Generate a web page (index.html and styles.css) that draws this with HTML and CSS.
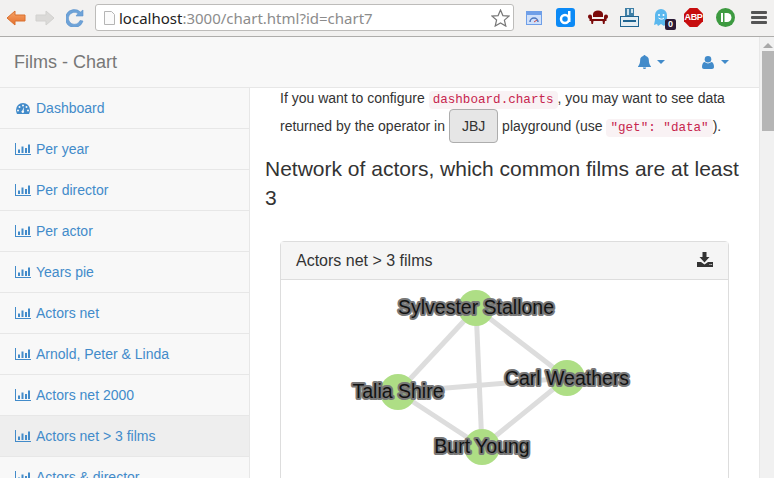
FILE: index.html
```html
<!DOCTYPE HTML>
<html>
<head>
	<title>Films - Chart</title>
	<link rel="stylesheet" href="styles.css">
</head>
<body>
	<svg class="defs" width="0" height="0">
		<defs>
			<linearGradient id="orange" x1="0" y1="0" x2="0" y2="1">
				<stop offset="0" stop-color="#f6a468"/>
				<stop offset="1" stop-color="#e56f2c"/>
			</linearGradient>
		</defs>
		<symbol id="bars" viewBox="0 0 16 12">
			<path d="M0 0h1v11h15v1H0z"/>
			<path d="M3 6.500h2V10H3zM6.500 3.500h2V10h-2zM10 5h2v5h-2zM13 1.500h2V10h-2z"/>
		</symbol>
	</svg>

	<div class="toolbar">
		<svg class="tool-icon" width="20" height="16" viewBox="0 0 20 16"><path d="M9 1 1 8l8 7v-4h10V5H9z" fill="url(#orange)" stroke="#d9702f"/></svg>
		<svg class="tool-icon fwd" width="20" height="16" viewBox="0 0 20 16"><path d="M11 1l8 7-8 7v-4H1V5h10z" fill="#dbdad8" stroke="#d2d1cf"/></svg>
		<svg class="tool-icon reload" width="18" height="18" viewBox="0 0 18 18"><path d="M14 11.500A6 6 0 1 1 12 4.500L10 7h7V1l-2.500 2A9 9 0 1 0 17 12z" fill="#6ea3d8" stroke="#5b92cc" stroke-width=".6"/></svg>
		<div class="urlbar">
			<svg width="11" height="14" viewBox="0 0 11 14"><path d="M.5.500h7l3 3v10H.5z" fill="#fbfbfb" stroke="#b5b5b5"/></svg>
			<span class="url"><b>localhost</b>:3000/chart.html?id=chart7</span>
			<svg class="star" width="19" height="18" viewBox="0 0 19 18"><path d="M9.500 1l2.400 5.600 6.100.5-4.600 4 1.400 6-5.300-3.200L4.200 17l1.400-6L1 7.100l6.100-.5z" fill="#fff" stroke="#777" stroke-width="1.200"/></svg>
		</div>
		<div class="ext">
			<svg width="16" height="16" viewBox="0 0 16 16"><rect x=".5" y="1.500" width="15" height="13" fill="#cfe0fa" stroke="#6f9fe8"/><path d="M1 2h14v3H1z" fill="#6f9fe8"/><path d="M4 12a4 4 0 0 1 8 0" fill="none" stroke="#4a76c0" stroke-width="1.500"/><path d="M8 12l3-2" stroke="#c44" stroke-width="1"/></svg>
			<svg class="ext-d" width="19" height="19" viewBox="0 0 19 19"><rect width="19" height="19" rx="3" fill="#0c8af6"/><circle cx="9" cy="11" r="4" fill="none" stroke="#fff" stroke-width="2.500"/><path d="M12 3h2.500v11H12z" fill="#fff"/></svg>
			<svg class="ext-couch" width="20" height="15" viewBox="0 0 20 15"><path d="M5 7V4a5 3.500 0 0 1 10 0v3z" fill="#7b0b0b"/><path d="M0 6.500a2 2 0 0 1 4 0V9h12V6.500a2 2 0 0 1 4 0c0 1.500-1 2-1.500 2.500v2H1.500V9C1 8.500 0 8 0 6.500z" fill="#7b0b0b"/><path d="M3 11h2.500l-.5 3H3.500zM14.500 11H17l-.5 3H15z" fill="#7b0b0b"/></svg>
			<svg class="ext-print" width="19" height="19" viewBox="0 0 19 19"><rect x="5" y="0" width="9" height="9" fill="#3f7fa6"/><path d="M7 1h2v6H7zM11 1h2v4h-2z" fill="#cfe3ee"/><rect x=".5" y="8.500" width="18" height="10" fill="#e4edf2" stroke="#1f6491"/><path d="M3 12h13v2H3z" fill="#1f6491"/></svg>
			<div class="ghost">
				<svg width="15" height="19" viewBox="0 0 15 19"><path d="M1 7a6 6 0 0 1 12 0v5l2 5-3-1-2 2-3-2-3 2-1-2-3 1 1-5z" fill="#5bb8ee"/><circle cx="5" cy="7" r="1" fill="#fff"/><circle cx="9.500" cy="7" r="1" fill="#fff"/><path d="M4.500 10c2 1.500 4 1.500 5.500 0" fill="none" stroke="#fff"/></svg>
				<span class="badge">0</span>
			</div>
			<div class="abp"><span>ABP</span></div>
			<svg class="ext-push" width="19" height="19" viewBox="0 0 19 19"><circle cx="9.500" cy="9.500" r="9.500" fill="#3d9a40"/><path d="M5 5h2v9H5z" fill="#fff"/><path d="M8.500 5H11a4.500 4.500 0 0 1 0 9H8.500z" fill="#fff"/></svg>
			<div class="menu-btn"><i></i><i></i><i></i></div>
		</div>
	</div>

	<div class="window">
		<div class="page">
			<nav class="navbar">
				<span class="brand">Films - Chart</span>
				<div class="nav-right">
					<a class="nav-drop bell">
						<svg width="13" height="14" viewBox="0 0 12 14" preserveAspectRatio="none"><path d="M6 0a1 1 0 0 1 1 1.100C9 1.500 10 3.200 10 5c0 3 .8 5 2 6.500V12H0v-.5C1.200 10 2 8 2 5c0-1.800 1-3.500 3-3.900A1 1 0 0 1 6 0zM4.500 12.500h3a1.500 1.500 0 0 1-3 0z"/></svg>
						<i class="caret"></i>
					</a>
					<a class="nav-drop">
						<svg width="12" height="13" viewBox="0 0 12 13"><circle cx="6" cy="3.300" r="3.300"/><path d="M0 11c0-3 1-5 3-5 1 1 2 1.400 3 1.400S8 7 9 6c2 0 3 2 3 5 0 1.200-.8 2-2 2H2c-1.200 0-2-.8-2-2z"/></svg>
						<i class="caret"></i>
					</a>
				</div>
			</nav>

			<div class="columns">
				<ul class="sidebar">
					<li><a><svg class="dash-icon" width="14" height="11" viewBox="0 0 14 11"><path fill-rule="evenodd" d="M7 0a7 7 0 0 1 7 7c0 1.500-.4 2.800-1 4H1C.4 9.800 0 8.500 0 7a7 7 0 0 1 7-7zM7 1.500a1 1 0 1 0 0 2 1 1 0 0 0 0-2zM3.500 3a1 1 0 1 0 0 2 1 1 0 0 0 0-2zM10.500 3a1 1 0 1 0 0 2 1 1 0 0 0 0-2zM2 6.500a1 1 0 1 0 0 2 1 1 0 0 0 0-2zM12 6.500a1 1 0 1 0 0 2 1 1 0 0 0 0-2zM8 4 6.300 7.500a1.300 1.300 0 1 0 1.400.3z"/></svg>Dashboard</a></li>
					<li><a><svg class="bar-icon"><use href="#bars"/></svg>Per year</a></li>
					<li><a><svg class="bar-icon"><use href="#bars"/></svg>Per director</a></li>
					<li><a><svg class="bar-icon"><use href="#bars"/></svg>Per actor</a></li>
					<li><a><svg class="bar-icon"><use href="#bars"/></svg>Years pie</a></li>
					<li><a><svg class="bar-icon"><use href="#bars"/></svg>Actors net</a></li>
					<li><a><svg class="bar-icon"><use href="#bars"/></svg>Arnold, Peter &amp; Linda</a></li>
					<li><a><svg class="bar-icon"><use href="#bars"/></svg>Actors net 2000</a></li>
					<li class="active"><a><svg class="bar-icon"><use href="#bars"/></svg>Actors net &gt; 3 films</a></li>
					<li><a><svg class="bar-icon"><use href="#bars"/></svg>Actors &amp; director</a></li>
				</ul>

				<div class="main">
					<p class="intro">If you want to configure <code>dashboard.charts</code>, you may want to see data returned by the operator in <a class="btn">JBJ</a> playground (use <code>"get": "data"</code>).</p>
					<h3>Network of actors, which common films are at least 3</h3>
					<div class="panel">
						<div class="panel-heading">
							<span>Actors net &gt; 3 films</span>
							<svg width="16" height="15" viewBox="0 0 16 15"><path d="M5.500 0h4v5h3L7.500 10.500 2.500 5h3z"/><path d="M0 10h4l3.500 2.500L11 10h5v5H0z"/><path d="M12.500 12.500h1M14.300 12.500h.8" stroke="#f5f5f5"/></svg>
						</div>
						<svg class="graph" width="447" height="220" viewBox="281 280 447 220">
							<g class="edges">
								<line x1="476" y1="308" x2="567" y2="378"/>
								<line x1="476" y1="308" x2="398" y2="392"/>
								<line x1="476" y1="308" x2="482" y2="447"/>
								<line x1="398" y1="392" x2="567" y2="378"/>
								<line x1="398" y1="392" x2="482" y2="447"/>
								<line x1="567" y1="378" x2="482" y2="447"/>
							</g>
							<g class="nodes">
								<circle cx="476" cy="308" r="18"/>
								<circle cx="567" cy="378" r="18"/>
								<circle cx="398" cy="392" r="18"/>
								<circle cx="482" cy="447" r="18"/>
							</g>
							<g class="labels">
								<text x="476" y="314">Sylvester Stallone</text>
								<text x="567" y="385">Carl Weathers</text>
								<text x="398" y="398">Talia Shire</text>
								<text x="482" y="453">Burt Young</text>
							</g>
						</svg>
					</div>
				</div>
			</div>
		</div>
		<div class="scrollbar">
			<i class="up"></i>
			<div class="thumb"></div>
		</div>
	</div>
</body>
</html>
```

FILE: styles.css
```css
* {
	box-sizing: border-box;
}

html, body {
	height: 100%;
}

body {
	margin: 0;
	overflow: hidden;
	font-family: "Liberation Sans", sans-serif;
	font-size: 14px;
	line-height: 20px;
	color: #333;
	background: #fff;
}

.defs {
	display: block;
	height: 0;
}

/* browser toolbar */
.toolbar {
	height: 37px;
	display: flex;
	align-items: center;
	padding: 0 7px 1px 6px;
	background: #f2f1f0;
	border-bottom: 1px solid #aeadab;
}

.tool-icon {
	flex: none;
}

.fwd {
	margin-left: 9px;
}

.reload {
	margin-left: 11px;
}

.urlbar {
	width: 420px;
	height: 27px;
	margin-left: 11px;
	padding: 0 3px 0 8px;
	display: flex;
	align-items: center;
	background: #fff;
	border: 1px solid #bdbcba;
	border-radius: 3px;
}

.url {
	margin-left: 4px;
	font-family: "Noto Sans", sans-serif;
	font-size: 15px;
	color: #8c8c8c;
	white-space: nowrap;
}

.url b {
	font-weight: normal;
	color: #222;
}

.star {
	margin-left: auto;
}

.ext {
	flex: 1;
	display: flex;
	align-items: center;
	margin-left: 12px;
}

.ext-d {
	margin-left: 14px;
}

.ext-couch {
	margin-left: 13px;
}

.ext-print {
	margin-left: 12px;
}

.ghost {
	position: relative;
	width: 15px;
	height: 19px;
	margin-left: 15px;
}

.ghost svg {
	display: block;
}

.badge {
	position: absolute;
	left: 11px;
	top: 11px;
	width: 11px;
	height: 11px;
	background: #2b1a36;
	border-radius: 2px;
	color: #fff;
	font-size: 9px;
	font-weight: bold;
	line-height: 11px;
	text-align: center;
}

.abp {
	width: 19px;
	height: 19px;
	margin-left: 15px;
	background: #c70d0e;
	clip-path: polygon(30% 0, 70% 0, 100% 30%, 100% 70%, 70% 100%, 30% 100%, 0 70%, 0 30%);
	color: #fff;
	font-size: 9px;
	font-weight: bold;
	line-height: 19px;
	letter-spacing: -.4px;
	text-align: center;
}

.ext-push {
	margin-left: 13px;
}

.menu-btn {
	margin-left: 16px;
	width: 16px;
}

.menu-btn i {
	display: block;
	height: 3px;
	margin: 2px 0;
	background: #555;
	border-radius: 1px;
}

/* page below the toolbar */
.window {
	display: flex;
	height: 441px;
}

.page {
	flex: 1;
	min-width: 0;
	overflow: hidden;
}

.navbar {
	height: 51px;
	display: flex;
	align-items: center;
	justify-content: space-between;
	background: #f8f8f8;
	border-bottom: 1px solid #e7e7e7;
}

.brand {
	padding-left: 14px;
	font-size: 18px;
	color: #777;
}

.nav-right {
	display: flex;
	padding-right: 30px;
	gap: 37px;
}

.nav-drop {
	display: flex;
	align-items: center;
	gap: 7px;
	color: #428bca;
}

.nav-drop.bell {
	gap: 6px;
}

.nav-drop svg {
	fill: #428bca;
}

.caret {
	width: 0;
	height: 0;
	border-top: 4px solid #428bca;
	border-left: 4.500px solid transparent;
	border-right: 4.500px solid transparent;
}

.columns {
	display: flex;
}

.sidebar {
	flex: none;
	width: 250px;
	min-height: 400px;
	margin: 0;
	padding: 0;
	list-style: none;
	background: #f8f8f8;
	border-right: 1px solid #e7e7e7;
}

.sidebar li {
	height: 41px;
	padding: 10px 15px;
	border-bottom: 1px solid #e7e7e7;
}

.sidebar li.active {
	background: #eee;
}

.sidebar a {
	display: flex;
	align-items: center;
	color: #428bca;
	white-space: nowrap;
}

.bar-icon {
	width: 16px;
	height: 12px;
	margin-right: 5px;
	fill: #428bca;
}

.dash-icon {
	margin: 0 6px 0 1px;
	fill: #428bca;
}

.main {
	flex: 1;
	min-width: 0;
	padding: 0 15px;
}

.intro {
	margin: 0 0 11px;
	padding: 0 15px;
}

code {
	padding: 2px 4px;
	font-family: "Liberation Mono", monospace;
	font-size: 12.600px;
	color: #c7254e;
	background: #f9f2f4;
	border-radius: 4px;
}

.btn {
	display: inline-block;
	margin-top: -1px;
	padding: 6px 12px;
	color: #333;
	background: #e6e6e6;
	border: 1px solid #adadad;
	border-radius: 4px;
}

h3 {
	margin: 0 0 29px;
	font-size: 21px;
	font-weight: 500;
	line-height: 29px;
}

.panel {
	margin: 0 15px;
	background: #fff;
	border: 1px solid #ddd;
	border-radius: 4px 4px 0 0;
}

.panel-heading {
	height: 38px;
	display: flex;
	align-items: center;
	justify-content: space-between;
	padding: 0 15px;
	font-size: 16px;
	background: #f5f5f5;
	border-bottom: 1px solid #ddd;
}

.panel-heading svg {
	margin-top: -2px;
	fill: #333;
}

.graph {
	display: block;
}

.edges line {
	stroke: #ddd;
	stroke-width: 5;
}

.nodes circle {
	fill: #aede85;
}

.labels {
	opacity: .99;
}

.labels text {
	font-size: 19.500px;
	text-anchor: middle;
	fill: #111;
	stroke: #777;
	stroke-width: 4px;
	stroke-linejoin: round;
	paint-order: stroke;
}

.scrollbar {
	flex: none;
	width: 15px;
	padding-left: 2px;
	background: #f1f1f1;
	border-left: 1px solid #e8e8e8;
}

.up {
	display: block;
	width: 0;
	height: 0;
	margin: 6px 0 0 1px;
	border-bottom: 5px solid #a8a8a8;
	border-left: 5px solid transparent;
	border-right: 5px solid transparent;
}

.thumb {
	width: 13px;
	height: 80px;
	margin-top: 3px;
	background: #b5b5b5;
}
```
